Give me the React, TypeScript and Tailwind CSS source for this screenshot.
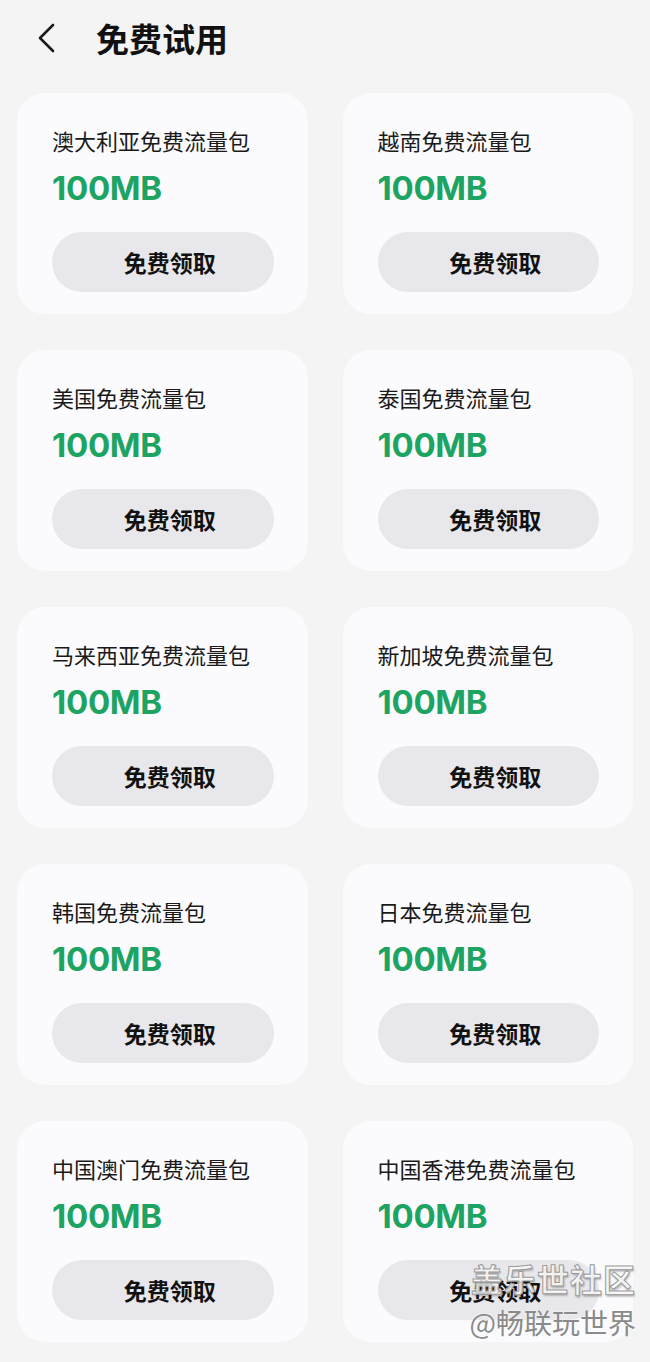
import React from "react";

const items = [
  "澳大利亚免费流量包",
  "越南免费流量包",
  "美国免费流量包",
  "泰国免费流量包",
  "马来西亚免费流量包",
  "新加坡免费流量包",
  "韩国免费流量包",
  "日本免费流量包",
  "中国澳门免费流量包",
  "中国香港免费流量包",
];

const cjk = { fontFamily: '"Noto Sans CJK SC", "Noto Sans", sans-serif' };

function Card({ title }: { title: string }) {
  return (
    <div className="bg-[#fbfbfd] rounded-[28px] h-[221px] pl-[35px] pr-[34px] pt-[32px] flex flex-col">
      <div className="text-[22px] leading-[30px] text-[#1a1a1a]" style={cjk}>
        {title}
      </div>
      <div
        className="text-[33px] leading-[40px] font-bold text-[#1da462] mt-[13px] tracking-[-0.3px]"
        style={{ fontFamily: 'Inter, "Noto Sans", sans-serif' }}
      >
        100MB
      </div>
      <div className="mt-[24px] h-[60px] rounded-full bg-[#e8e8ec] flex items-center justify-center pl-[14px]">
        <span className="text-[23px] font-bold text-[#111]" style={cjk}>
          免费领取
        </span>
      </div>
    </div>
  );
}

export default function App() {
  return (
    <div className="relative w-[650px] h-[1362px] bg-[#f4f4f5] overflow-hidden" style={cjk}>
      <div className="h-[93px] flex items-start pt-[16px]">
        <div className="w-[96px] flex pl-[36px] pt-[7px]">
          <svg width="22" height="30" viewBox="0 0 22 30" fill="none">
            <path d="M17 2 L4 15 L17 28" stroke="#1a1a1a" strokeWidth="2.6" strokeLinecap="round" strokeLinejoin="round" />
          </svg>
        </div>
        <div className="text-[33px] leading-[44px] font-bold text-[#111]">免费试用</div>
      </div>
      <div className="grid grid-cols-2 gap-x-[35px] gap-y-[36px] px-[17px]">
        {items.map((t) => (
          <Card key={t} title={t} />
        ))}
      </div>
      <div className="absolute right-[14px] top-[1258px] flex flex-col items-end pointer-events-none">
        <div
          className="text-[32px] leading-[40px] font-bold text-white/80 tracking-[1px]"
          style={{ WebkitTextStroke: "1px #9a9a9a", textShadow: "1px 2px 2px rgba(0,0,0,0.25)" }}
        >
          盖乐世社区
        </div>
        <div className="text-[28px] leading-[36px] text-[#8a8a8a] mt-[6px]" style={{ textShadow: "0 0 2px #fff" }}>
          @畅联玩世界
        </div>
      </div>
    </div>
  );
}
